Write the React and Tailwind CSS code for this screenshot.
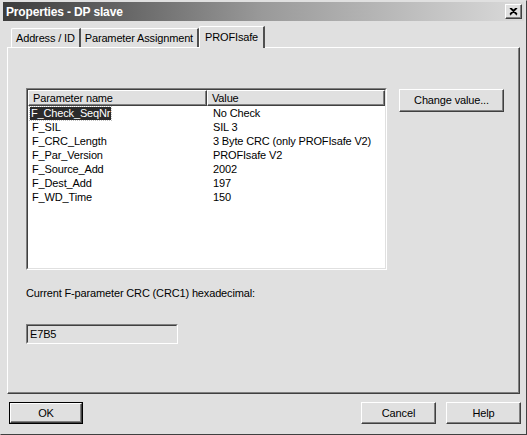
const rows = [
    ["F_Check_SeqNr", "No Check"],
    ["F_SIL", "SIL 3"],
    ["F_CRC_Length", "3 Byte CRC (only PROFIsafe V2)"],
    ["F_Par_Version", "PROFIsafe V2"],
    ["F_Source_Add", "2002"],
    ["F_Dest_Add", "197"],
    ["F_WD_Time", "150"],
];

const raised = "border border-t-white border-l-white border-r-[#404040] border-b-[#404040] shadow-[inset_-1px_-1px_0_#808080]";

function Button({children, className}) {
    return (
        <button className={`${raised} bg-[#e0e0e0] text-[11px] text-black flex items-center justify-center ${className}`}>
            {children}
        </button>
    );
}

export default function App() {
    return (
        <div className="w-[527px] h-[435px] bg-[#e0e0e0] border border-t-[#e0e0e0] border-l-[#e0e0e0] border-r-[#404040] border-b-[#404040] p-[1px] flex flex-col font-['Liberation_Sans',Arial,sans-serif] text-black select-none tracking-[-0.15px]">
            <div className="h-[19px] mx-[1px] flex items-center justify-between pl-[3px] pr-[2px] bg-gradient-to-r from-[#3c3c3c] via-[#9a9a9a] to-[#dadada]">
                <span className="text-white font-bold text-[12px] leading-none">Properties - DP slave</span>
                <div className={`${raised} w-[17px] h-[15px] bg-[#e0e0e0] flex items-center justify-center`}>
                    <svg width="9" height="8" viewBox="0 0 9 8">
                        <path d="M1 0 L8 7 M8 0 L1 7 M2 0 L8 6 M7 0 L1 6" stroke="black" strokeWidth="1.2" />
                    </svg>
                </div>
            </div>

            <div className="flex items-end pl-[9px] mt-[5px] text-[11px]">
                <div className="h-[19px] px-[4px] flex items-center bg-[#e0e0e0] border-t border-l border-white border-r-2 border-r-[#505050] rounded-tl-[2px]">Address / ID</div>
                <div className="h-[19px] px-[4px] flex items-center bg-[#e0e0e0] border-t border-white border-r-2 border-r-[#505050]">Parameter Assignment</div>
                <div className="h-[22px] px-[5px] -mb-[1px] relative z-10 flex items-center bg-[#e0e0e0] border-t border-l border-white border-r-2 border-r-[#505050] rounded-tl-[2px]">PROFIsafe</div>
            </div>

            <div className="ml-[5px] mr-[5px] h-[347px] border border-t-white border-l-white border-r-[#404040] border-b-[#404040] shadow-[inset_-1px_-1px_0_#808080] pl-[18px] pt-[40px] flex flex-col">
                <div className="flex items-start gap-[12px]">
                    <div className="w-[361px] h-[182px] bg-white border border-t-[#808080] border-l-[#808080] border-r-white border-b-white">
                        <div className="w-full h-full border border-t-[#404040] border-l-[#404040] border-r-[#e0e0e0] border-b-[#e0e0e0] text-[11px]">
                            <div className="flex h-[16px]">
                                <div className={`${raised} w-[179px] bg-[#e0e0e0] pl-[4px] flex items-center`}>Parameter name</div>
                                <div className={`${raised} flex-1 bg-[#e0e0e0] pl-[4px] flex items-center`}>Value</div>
                            </div>
                            {rows.map(([name, value], i) => (
                                <div key={name} className="flex h-[14px] items-center">
                                    <div className="w-[179px] pl-[2px]">
                                        {i === 0 ? (
                                            <span className="px-[1px] bg-[#2a2a2a] text-white outline-1 outline-dotted outline-[#c0c0c0] leading-[13px] inline-block">{name}</span>
                                        ) : (
                                            <span className="px-[2px]">{name}</span>
                                        )}
                                    </div>
                                    <div className="pl-[6px]">{value}</div>
                                </div>
                            ))}
                        </div>
                    </div>
                    <Button className="w-[105px] h-[23px] mt-[1px]">Change value...</Button>
                </div>

                <div className="mt-[17px] text-[11px] leading-[13px]">Current F-parameter CRC (CRC1) hexadecimal:</div>

                <div className="mt-[24px] w-[152px] h-[20px] bg-[#e0e0e0] border border-t-[#808080] border-l-[#808080] border-r-white border-b-white">
                    <div className="w-full h-full border border-t-[#404040] border-l-[#404040] border-r-[#e0e0e0] border-b-[#e0e0e0] text-[11px] pl-[2px] flex items-center">E7B5</div>
                </div>
            </div>

            <div className="flex items-center mt-[8px] pl-[7px] pr-[4px]">
                <div className="border border-black">
                    <Button className="w-[72px] h-[20px]">OK</Button>
                </div>
                <div className="flex-1" />
                <Button className="w-[75px] h-[22px]">Cancel</Button>
                <Button className="w-[75px] h-[22px] ml-[10px]">Help</Button>
            </div>
        </div>
    );
}
